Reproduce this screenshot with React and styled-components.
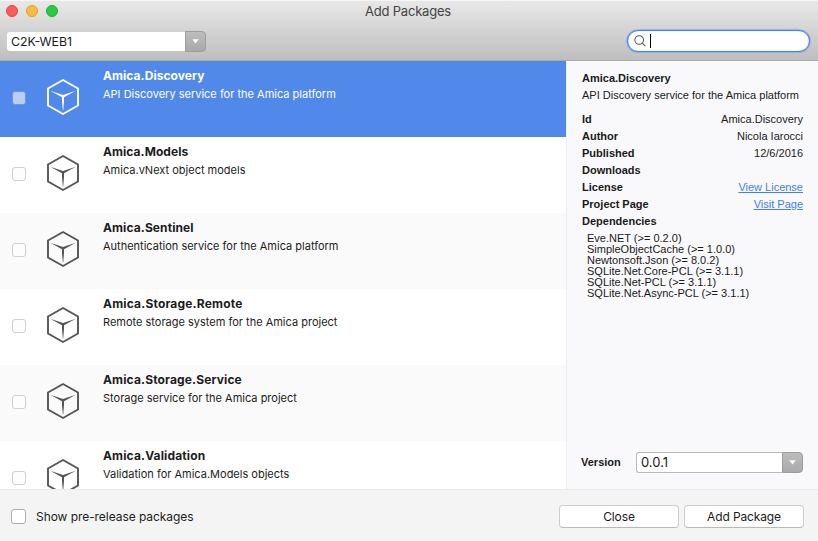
import React from "react";
import styled, { createGlobalStyle } from "styled-components";

const sans = '"Liberation Sans", Arial, sans-serif';
const ui = 'Inter, "Liberation Sans", sans-serif';

const Global = createGlobalStyle`
  *, *::before, *::after { box-sizing: border-box; }
  body { margin: 0; background: #f4f4f4; color: #1c1c1c; font-family: ${ui}; }
`;

const Window = styled.div`
  width: 818px;
  height: 541px;
  display: flex;
  flex-direction: column;
  overflow: hidden;
  background: #f4f4f4;
`;

const Header = styled.header`
  height: 61px;
  flex: none;
  display: flex;
  flex-direction: column;
  background: linear-gradient(#e8e8e8, #bebebe);
  border-top: 1px solid #f5f5f5;
  border-bottom: 1px solid #a9a9a9;
`;

const TitleBar = styled.div`
  display: grid;
  grid-template-columns: 1fr auto 1fr;
  align-items: center;
  height: 20px;
  padding: 0 6px;
`;

const Lights = styled.div`
  display: flex;
  gap: 8px;
`;

const Light = styled.span`
  width: 12px;
  height: 12px;
  border-radius: 50%;
  background: ${(p) => p.$fill};
  border: 1px solid ${(p) => p.$edge};
`;

const Title = styled.h1`
  margin: 0;
  padding-right: 2px;
  font-size: 13px;
  line-height: 20px;
  font-weight: 400;
  letter-spacing: -0.2px;
  color: #444;
`;

const Toolbar = styled.div`
  display: flex;
  justify-content: space-between;
  align-items: flex-start;
  padding: 10px 8px 0 7px;
`;

const Combo = styled.div`
  display: flex;
  align-items: center;
  width: ${(p) => p.$width}px;
  height: 21px;
`;

const ComboText = styled.span`
  flex: 1;
  height: ${(p) => (p.$outlined ? 21 : 19)}px;
  padding-left: 4px;
  border: ${(p) => (p.$outlined ? "1px solid #b9b9b9" : "0")};
  border-right: 0;
  border-radius: 3px 0 0 3px;
  background: #fff;
  font-size: ${(p) => (p.$outlined ? 13 : 12.3)}px;
  line-height: ${(p) => (p.$outlined ? 18 : 19)}px;
  color: #1a1a1a;
`;

const ComboButton = styled.span`
  display: flex;
  align-items: center;
  justify-content: center;
  width: 21px;
  height: 21px;
  border: 1px solid #9c9c9c;
  border-radius: 0 4px 4px 0;
  background: linear-gradient(#bdbdbd, #a9a9a9);
`;

const Search = styled.div`
  display: flex;
  align-items: center;
  width: 183px;
  height: 22px;
  margin-top: -1px;
  padding-left: 6px;
  gap: 4px;
  border: 1px solid #4a82e6;
  border-radius: 11px;
  background: #fff;
  box-shadow: 0 0 1px 0.5px #6f9cf0, inset 0 0 1px #7da6f2;
`;

const Caret = styled.span`
  width: 1px;
  height: 14px;
  background: #000;
`;

const Main = styled.main`
  display: flex;
  height: 428px;
  flex: none;
`;

const List = styled.ul`
  width: 566px;
  margin: 0;
  padding: 0;
  overflow: hidden;
  list-style: none;
  background: #fff;
`;

const Row = styled.li`
  display: flex;
  align-items: flex-start;
  height: 76px;
  padding-left: 12px;
  color: ${(p) => (p.$selected ? "#fff" : "#1c1c1c")};
  background: ${(p) => (p.$selected ? "#5189eb" : p.$striped ? "#fafafa" : "#fff")};
`;

const RowCheck = styled.span`
  width: 14px;
  height: 14px;
  margin: 30px 20px 0 0;
  border: 1px solid ${(p) => (p.$selected ? "#6f93d6" : "#d0d0d0")};
  border-radius: 3px;
  background: ${(p) => (p.$selected ? "#b8cff7" : "#fdfdfd")};
`;

const CubeSvg = styled.svg`
  display: block;
  flex: none;
  margin: 17px 23px 0 0;
  color: ${(p) => (p.$selected ? "#fff" : "#555")};
`;

const RowText = styled.div`
  padding-top: 5px;
`;

const PackageName = styled.div`
  font-size: 12px;
  line-height: 19px;
  font-weight: 700;
  letter-spacing: ${(p) => p.$tracking}px;
`;

const Summary = styled.div`
  font-size: 11px;
  line-height: 18px;
`;

const Details = styled.aside`
  flex: 1;
  display: flex;
  flex-direction: column;
  padding: 9px 15px 16px 15px;
  border-left: 1px solid #ededf0;
  background: #f9f9fb;
  font: 11px/17px ${sans};
  color: #1a1a1a;
`;

const DetailTitle = styled.div`
  font-weight: 700;
`;

const DetailSummary = styled.div`
  white-space: nowrap;
  margin-bottom: 7px;
`;

const Field = styled.div`
  display: flex;
  justify-content: space-between;
  height: 17px;
`;

const FieldLabel = styled.span`
  font-weight: 700;
`;

const Link = styled.a`
  color: #4180ea;
  text-decoration: underline;
  text-underline-offset: 1px;
`;

const Dependencies = styled.ul`
  margin: 3px 0 0;
  padding: 0 0 0 5px;
  list-style: none;
  line-height: 11px;
`;

const Version = styled.div`
  display: flex;
  align-items: center;
  justify-content: space-between;
  margin: auto 0 0 -1px;
  font-weight: 700;
`;

const VersionValue = styled.div`
  font-family: ${ui};
  font-weight: 400;
`;

const Footer = styled.footer`
  flex: 1;
  display: flex;
  align-items: flex-start;
  padding: 15px 14px 0 11px;
  border-top: 1px solid #ebebeb;
  font-size: 12px;
`;

const FooterCheck = styled.span`
  width: 15px;
  height: 15px;
  margin: 4px 10px 0 0;
  border: 1px solid #adadad;
  border-radius: 3px;
  background: #fff;
`;

const FooterLabel = styled.label`
  flex: 1;
  line-height: 23px;
  letter-spacing: -0.06px;
`;

const Button = styled.button`
  width: 120px;
  height: 23px;
  margin-left: 5px;
  padding: 0;
  border: 1px solid #cdcdcd;
  border-bottom-color: #b9b9b9;
  border-radius: 4px;
  background: #fff;
  color: #1a1a1a;
  font: 12px/21px ${ui};
  letter-spacing: -0.12px;
`;

function Arrow() {
  return (
    <svg width="7" height="5" viewBox="0 0 7 5">
      <path d="M0.3 0.3H6.7L3.5 4.6Z" fill="#fff" />
    </svg>
  );
}

function Cube({ id, selected }) {
  const g = `stem-${id}`;
  return (
    <CubeSvg $selected={selected} width="34" height="38" viewBox="0 0 34 38">
      <defs>
        <linearGradient id={g} x1="0" y1="18" x2="0" y2="33" gradientUnits="userSpaceOnUse">
          <stop offset="0.35" stopColor="currentColor" />
          <stop offset="1" stopColor="currentColor" stopOpacity="0.15" />
        </linearGradient>
      </defs>
      <path d="M17 2L32 10.5V27.5L17 36L2 27.5V10.5Z" fill="none" stroke="currentColor" strokeWidth="1.9" />
      <path d="M4.2 12.8L17 17L29.8 12.8L18 19.2H16Z" fill="currentColor" />
      <path d="M16 18H18V32.5H16Z" fill={`url(#${g})`} />
    </CubeSvg>
  );
}

const packages = [
  ["Amica.Discovery", "API Discovery service for the Amica platform", 0.06],
  ["Amica.Models", "Amica.vNext object models", 0.06],
  ["Amica.Sentinel", "Authentication service for the Amica platform", 0.1],
  ["Amica.Storage.Remote", "Remote storage system for the Amica project", 0.18],
  ["Amica.Storage.Service", "Storage service for the Amica project", 0.14],
  ["Amica.Validation", "Validation for Amica.Models objects", 0.14],
];

const fields = [
  ["Id", "Amica.Discovery"],
  ["Author", "Nicola Iarocci"],
  ["Published", "12/6/2016"],
  ["Downloads", ""],
  ["License", "View License", true],
  ["Project Page", "Visit Page", true],
  ["Dependencies", ""],
];

const dependencies = [
  "Eve.NET (>= 0.2.0)",
  "SimpleObjectCache (>= 1.0.0)",
  "Newtonsoft.Json (>= 8.0.2)",
  "SQLite.Net.Core-PCL (>= 3.1.1)",
  "SQLite.Net-PCL (>= 3.1.1)",
  "SQLite.Net.Async-PCL (>= 3.1.1)",
];

export default function App() {
  return (
    <Window>
      <Global />
      <Header>
        <TitleBar>
          <Lights>
            <Light $fill="#fc5b57" $edge="#e2463f" />
            <Light $fill="#fdbc40" $edge="#dfa033" />
            <Light $fill="#2bc840" $edge="#1eac2f" />
          </Lights>
          <Title>Add Packages</Title>
        </TitleBar>
        <Toolbar>
          <Combo $width={199}>
            <ComboText>C2K-WEB1</ComboText>
            <ComboButton><Arrow /></ComboButton>
          </Combo>
          <Search>
            <svg width="12" height="12" viewBox="0 0 13 13" fill="none" stroke="#555" strokeWidth="1.1">
              <circle cx="5.6" cy="5.4" r="4.7" />
              <path d="M9 8.8L12.3 12.1" />
            </svg>
            <Caret />
          </Search>
        </Toolbar>
      </Header>
      <Main>
        <List>
          {packages.map(([name, summary, tracking], i) => (
            <Row key={name} $selected={i === 0} $striped={i % 2 === 0}>
              <RowCheck $selected={i === 0} />
              <Cube id={i} selected={i === 0} />
              <RowText>
                <PackageName $tracking={tracking}>{name}</PackageName>
                <Summary>{summary}</Summary>
              </RowText>
            </Row>
          ))}
        </List>
        <Details>
          <DetailTitle>Amica.Discovery</DetailTitle>
          <DetailSummary>API Discovery service for the Amica platform</DetailSummary>
          {fields.map(([label, value, link]) => (
            <Field key={label}>
              <FieldLabel>{label}</FieldLabel>
              {link ? <Link>{value}</Link> : <span>{value}</span>}
            </Field>
          ))}
          <Dependencies>
            {dependencies.map((d) => <li key={d}>{d}</li>)}
          </Dependencies>
          <Version>
            Version
            <VersionValue>
              <Combo $width={167}>
                <ComboText $outlined>0.0.1</ComboText>
                <ComboButton><Arrow /></ComboButton>
              </Combo>
            </VersionValue>
          </Version>
        </Details>
      </Main>
      <Footer>
        <FooterCheck />
        <FooterLabel>Show pre-release packages</FooterLabel>
        <Button>Close</Button>
        <Button>Add Package</Button>
      </Footer>
    </Window>
  );
}
